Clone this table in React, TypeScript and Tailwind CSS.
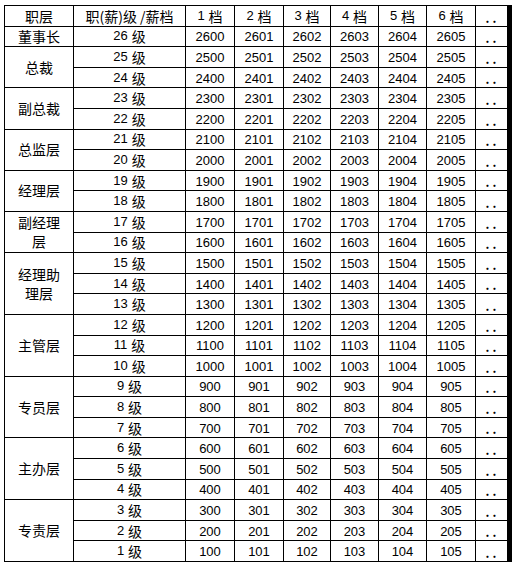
import React from "react";

type Group = { name: React.ReactNode; levels: number[] };

const groups: Group[] = [
  { name: "董事长", levels: [26] },
  { name: "总裁", levels: [25, 24] },
  { name: "副总裁", levels: [23, 22] },
  { name: "总监层", levels: [21, 20] },
  { name: "经理层", levels: [19, 18] },
  { name: <>副经理<br />层</>, levels: [17, 16] },
  { name: <>经理助<br />理层</>, levels: [15, 14, 13] },
  { name: "主管层", levels: [12, 11, 10] },
  { name: "专员层", levels: [9, 8, 7] },
  { name: "主办层", levels: [6, 5, 4] },
  { name: "专责层", levels: [3, 2, 1] },
];

const widths = [69, 112, 49, 49, 47, 48, 48, 49, 32];
const steps = [0, 1, 2, 3, 4, 5];

const cell = "border border-black p-0 font-normal";
const box = "h-[19.6px] flex items-center justify-center overflow-hidden whitespace-nowrap";
const latin = "font-['Liberation_Sans',sans-serif] text-[13px]";

function Dots() {
  return <div className={`${box} items-end pb-[2px] tracking-[3px] font-bold text-[12px] leading-[12px] pl-[2px]`}>..</div>;
}

export default function App() {
  return (
    <div className="w-[512px] h-[562px] bg-white pt-[5px] pl-[4px] overflow-hidden">
      <div className="inline-block border-r-4 border-black">
        <table className="table-fixed border-collapse w-[504px] text-black font-['Noto_Sans_CJK_SC',sans-serif] text-[14px] leading-[18px]">
          <colgroup>
            {widths.map((w, i) => (
              <col key={i} style={{ width: w }} />
            ))}
          </colgroup>
          <thead>
            <tr>
              <th className={cell}>
                <div className={box}>职层</div>
              </th>
              <th className={cell}>
                <div className={box}>职(薪)级 /薪档</div>
              </th>
              {steps.map((s) => (
                <th key={s} className={cell}>
                  <div className={`${box} gap-[4px]`}>
                    <span className={latin}>{s + 1}</span>
                    <span>档</span>
                  </div>
                </th>
              ))}
              <th className={cell}>
                <Dots />
              </th>
            </tr>
          </thead>
          <tbody>
            {groups.map((g) =>
              g.levels.map((lv, i) => (
                <tr key={lv}>
                  {i === 0 && (
                    <td rowSpan={g.levels.length} className={`${cell} text-center align-middle leading-[19px]`}>
                      {g.name}
                    </td>
                  )}
                  <td className={cell}>
                    <div className={`${box} gap-[4px]`}>
                      <span className={latin}>{lv}</span>
                      <span>级</span>
                    </div>
                  </td>
                  {steps.map((s) => (
                    <td key={s} className={cell}>
                      <div className={`${box} ${latin} pt-[2px]`}>{lv * 100 + s}</div>
                    </td>
                  ))}
                  <td className={cell}>
                    <Dots />
                  </td>
                </tr>
              ))
            )}
          </tbody>
        </table>
      </div>
    </div>
  );
}
